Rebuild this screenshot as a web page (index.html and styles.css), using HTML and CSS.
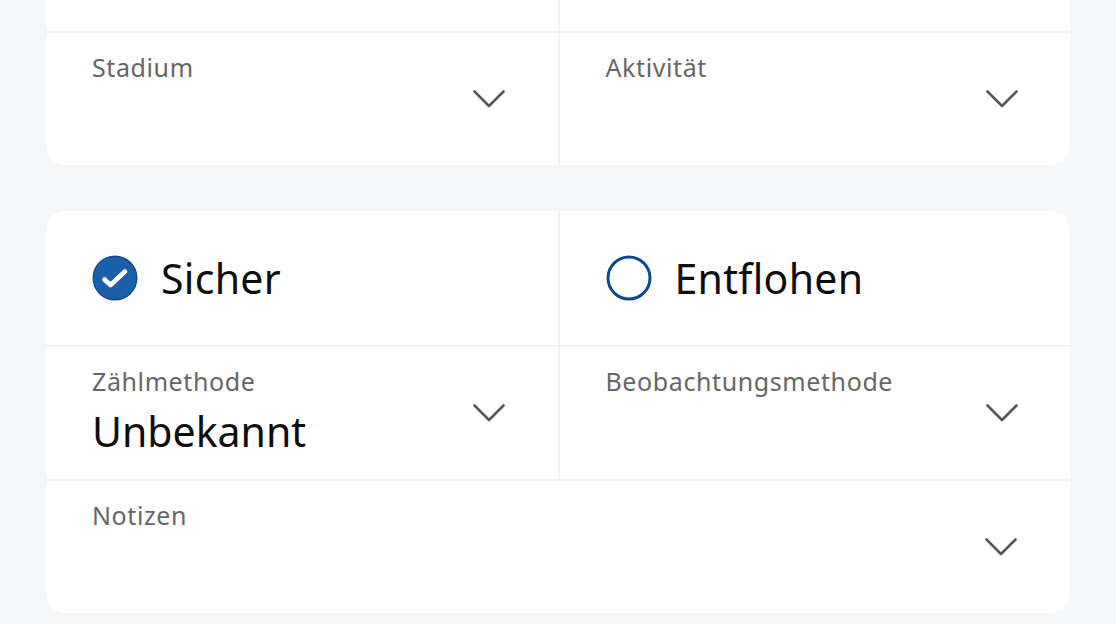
FILE: index.html
```html
<!DOCTYPE html>
<html lang="de">
<head>
<meta charset="utf-8">
<title>Beobachtung</title>
<link rel="stylesheet" href="styles.css">
</head>
<body>
<main class="page">
  <section class="card card-top">
    <div class="row row-stub">
      <div class="cell"></div>
      <div class="cell"></div>
    </div>
    <div class="row">
      <div class="cell field">
        <div class="field-text"><div class="label">Stadium</div></div>
        <svg class="chev" viewBox="0 0 32 18" width="32" height="18"><polyline points="1.5,1.5 16,16 30.5,1.5"/></svg>
      </div>
      <div class="cell field">
        <div class="field-text"><div class="label">Aktivität</div></div>
        <svg class="chev" viewBox="0 0 32 18" width="32" height="18"><polyline points="1.5,1.5 16,16 30.5,1.5"/></svg>
      </div>
    </div>
  </section>

  <section class="card">
    <div class="row row-choice">
      <div class="cell choice">
        <svg class="radio" viewBox="0 0 46 46" width="46" height="46">
          <circle cx="23" cy="23" r="21.8" fill="#1b5fab" stroke="#0f4a8c" stroke-width="1.4"/>
          <polyline points="12.5,24.5 18.5,30 33,16.5" fill="none" stroke="#fff" stroke-width="4.6" stroke-linecap="round" stroke-linejoin="round"/>
        </svg>
        <span class="choice-text">Sicher</span>
      </div>
      <div class="cell choice">
        <svg class="radio" viewBox="0 0 46 46" width="46" height="46">
          <circle cx="23" cy="23" r="21" fill="none" stroke="#0c4a8f" stroke-width="3"/>
        </svg>
        <span class="choice-text">Entflohen</span>
      </div>
    </div>
    <div class="row">
      <div class="cell field">
        <div class="field-text">
          <div class="label">Zählmethode</div>
          <div class="value">Unbekannt</div>
        </div>
        <svg class="chev" viewBox="0 0 32 18" width="32" height="18"><polyline points="1.5,1.5 16,16 30.5,1.5"/></svg>
      </div>
      <div class="cell field">
        <div class="field-text"><div class="label">Beobachtungsmethode</div></div>
        <svg class="chev" viewBox="0 0 32 18" width="32" height="18"><polyline points="1.5,1.5 16,16 30.5,1.5"/></svg>
      </div>
    </div>
    <div class="row">
      <div class="cell field">
        <div class="field-text"><div class="label">Notizen</div></div>
        <svg class="chev" viewBox="0 0 32 18" width="32" height="18"><polyline points="1.5,1.5 16,16 30.5,1.5"/></svg>
      </div>
    </div>
  </section>
</main>
</body>
</html>
```

FILE: styles.css
```css
html, body {
  margin: 0;
  padding: 0;
  background: #f6f7f9;
}

body {
  font-family: "Noto Sans", "Open Sans", sans-serif;
  color: #111;
}

.page {
  padding: 0 46px;
  display: flex;
  flex-direction: column;
  gap: 46px;
}

.card {
  background: #ffffff;
  border-radius: 20px;
  overflow: hidden;
}

.card-top {
  border-top-left-radius: 0;
  border-top-right-radius: 0;
}

.row {
  display: flex;
  height: 132px;
  border-bottom: 2px solid #f3f4f6;
}

.row:last-child {
  border-bottom: none;
}

.row-stub {
  height: 31px;
}

.row-choice {
  height: 134px;
}

.cell {
  flex: 1 1 0;
  display: flex;
  align-items: center;
  padding: 0 53px 0 46px;
}

.cell + .cell {
  border-left: 2px solid #f3f4f6;
  padding: 0 52px 0 46px;
}

.field-text {
  flex: 1;
  align-self: flex-start;
  padding-top: 19px;
}

.label {
  font-size: 25px;
  line-height: 30px;
  color: #666666;
  letter-spacing: 0.6px;
}

.value {
  margin-top: 10px;
  font-size: 41px;
  line-height: 50px;
  color: #0d0d0d;
}

.chev {
  flex: none;
  fill: none;
  stroke: #575757;
  stroke-width: 2.6;
  stroke-linecap: round;
  stroke-linejoin: round;
}

.choice {
  gap: 23px;
}

.radio {
  flex: none;
}

.choice-text {
  font-size: 41px;
  color: #0d0d0d;
  letter-spacing: 0.3px;
}
```
